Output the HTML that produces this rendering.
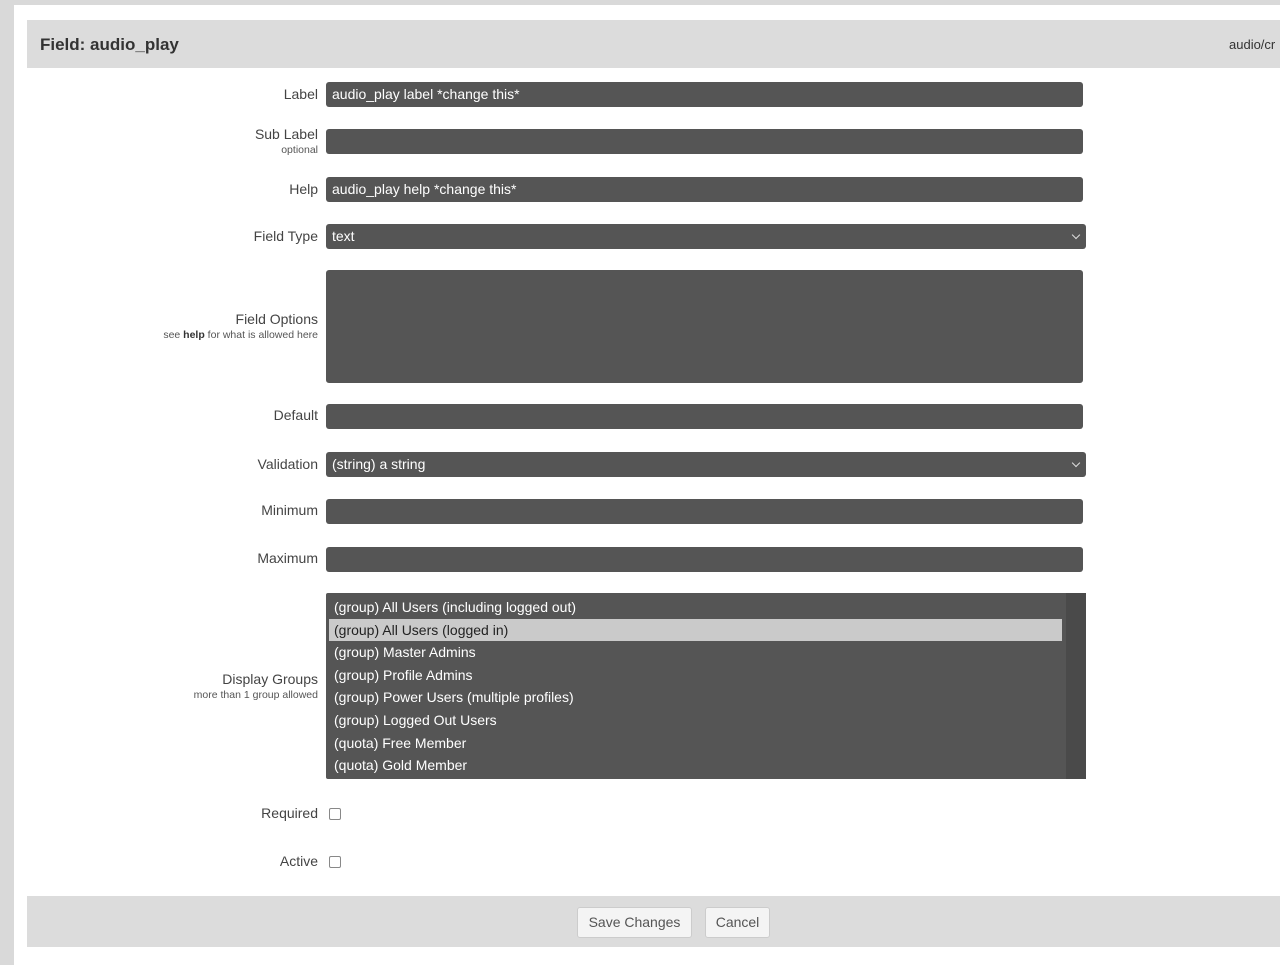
<!DOCTYPE html>
<html><head><style>
body{margin:0;background:#d9d9d9;font-family:"Liberation Sans",sans-serif;width:1280px;height:947px;overflow:hidden;position:relative}
.panel{position:absolute;left:14px;top:5px;width:1280px;height:960px;background:#fff}
.hdr{position:absolute;left:27px;top:20px;width:1260px;height:48px;background:#dcdcdc}
.hdr h1{position:absolute;left:13px;top:15px;margin:0;font-size:17px;font-weight:bold;color:#333}
.hdr .r{position:absolute;left:1202px;top:17px;font-size:13px;color:#333}
.lab{position:absolute;right:962px;text-align:right;font-size:14px;color:#444;line-height:16px}
.lab small{display:block;font-size:10.5px;color:#555;line-height:16px}
.lab small b{color:#333}
.in{position:absolute;left:326px;width:757px;height:25px;background:#555;border-radius:3px;color:#fff;font-size:14px;line-height:25px;padding-left:6px;box-sizing:border-box}
.sel{width:760px}
.sel:after{content:"";position:absolute;right:7px;top:8px;width:5px;height:5px;border-right:1.5px solid #ddd;border-bottom:1.5px solid #ddd;transform:rotate(45deg)}
.ms{position:absolute;left:326px;top:593px;width:760px;height:186px;background:#555;border-radius:2px;color:#fff;font-size:14px}
.ms div{height:22.6px;line-height:22px;padding-left:8px}
.ms .s{background:#cacaca;color:#222;margin-left:3px;padding-left:5px;width:728px}
.sb{position:absolute;right:0;top:0;width:20px;height:186px;background:#4a4a4a}
.cb{position:absolute;left:329px;width:10px;height:10px;border:1px solid #888;border-radius:2px;background:#fff}
.ftr{position:absolute;left:27px;top:896px;width:1260px;height:51px;background:#dcdcdc}
.btn{position:absolute;top:907px;height:31px;border:1px solid #ccc;border-radius:3px;background:#f4f4f4;font-size:14px;color:#555;line-height:29px;text-align:center;box-sizing:border-box}
</style></head><body>
<div class="panel"></div>
<div class="hdr"><h1>Field: audio_play</h1><span class="r">audio/cr</span></div>

<div class="lab" style="top:86px">Label</div>
<div class="in" style="top:82px">audio_play label *change this*</div>
<div class="lab" style="top:126px">Sub Label<small>optional</small></div>
<div class="in" style="top:129px"></div>
<div class="lab" style="top:181px">Help</div>
<div class="in" style="top:177px">audio_play help *change this*</div>
<div class="lab" style="top:228px">Field Type</div>
<div class="in sel" style="top:224px">text</div>
<div class="lab" style="top:311px">Field Options<small>see <b>help</b> for what is allowed here</small></div>
<div class="in" style="top:270px;height:113px"></div>
<div class="lab" style="top:407px">Default</div>
<div class="in" style="top:404px"></div>
<div class="lab" style="top:456px">Validation</div>
<div class="in sel" style="top:452px">(string) a string</div>
<div class="lab" style="top:502px">Minimum</div>
<div class="in" style="top:499px"></div>
<div class="lab" style="top:550px">Maximum</div>
<div class="in" style="top:547px"></div>
<div class="lab" style="top:671px">Display Groups<small>more than 1 group allowed</small></div>
<div class="ms"><div style="margin-top:3px">(group) All Users (including logged out)</div><div class="s">(group) All Users (logged in)</div><div>(group) Master Admins</div><div>(group) Profile Admins</div><div>(group) Power Users (multiple profiles)</div><div>(group) Logged Out Users</div><div>(quota) Free Member</div><div>(quota) Gold Member</div><span class="sb"></span></div>
<div class="lab" style="top:805px">Required</div>
<div class="cb" style="top:808px"></div>
<div class="lab" style="top:853px">Active</div>
<div class="cb" style="top:856px"></div>
<div class="ftr"></div>
<div class="btn" style="left:577px;width:115px">Save Changes</div>
<div class="btn" style="left:705px;width:65px">Cancel</div>
</body></html>
